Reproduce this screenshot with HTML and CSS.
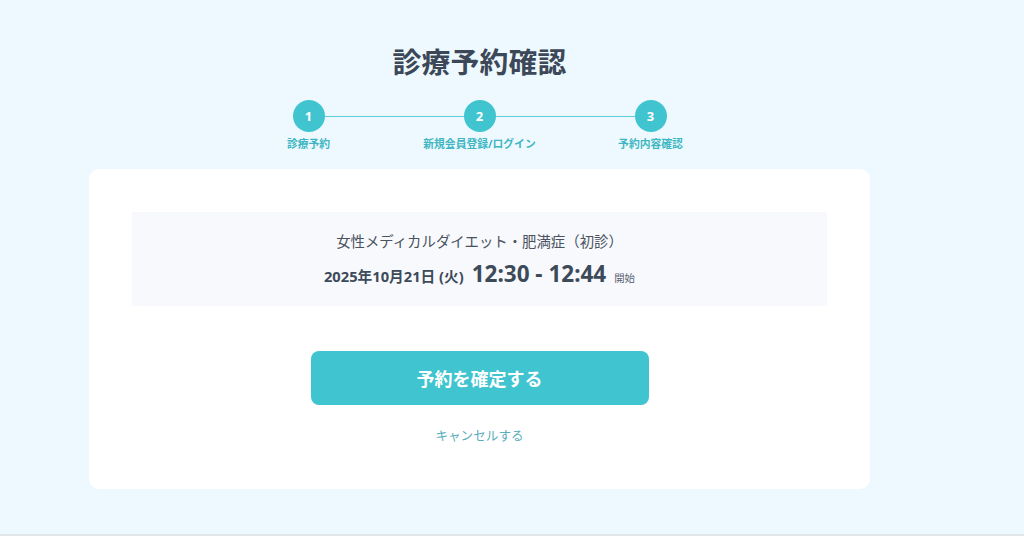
FILE: index.html
```html
<!DOCTYPE html>
<html lang="ja">
<head>
<meta charset="utf-8">
<title>診療予約確認</title>
<link rel="stylesheet" href="styles.css">
</head>
<body>
<div class="page">
  <main class="wrap">
    <h1 class="title">診療予約確認</h1>
    <ol class="steps">
      <li class="step"><span class="dot">1</span><span class="label">診療予約</span></li>
      <li class="step"><span class="dot">2</span><span class="label">新規会員登録/ログイン</span></li>
      <li class="step"><span class="dot">3</span><span class="label">予約内容確認</span></li>
    </ol>
    <section class="card">
      <div class="summary">
        <p class="service">女性メディカルダイエット・肥満症（初診）</p>
        <p class="when"><span class="date">2025年10月21日 (火)</span><span class="time">12:30 - 12:44</span><span class="start">開始</span></p>
      </div>
      <button class="confirm" type="button">予約を確定する</button>
      <a class="cancel" href="#">キャンセルする</a>
    </section>
  </main>
</div>
<footer class="foot"></footer>
</body>
</html>
```
FILE: styles.css
```css
* { box-sizing: border-box; }
html, body { margin: 0; padding: 0; }
body {
  background: #edf9fe;
  font-family: "Noto Sans", "Noto Sans CJK JP", sans-serif;
  color: #3d4756;
}
.page { height: 534px; overflow: hidden; }
.foot { height: 2px; background: #e3e6e8; }
.wrap {
  width: 959px;
  padding-top: 42px;
  display: flex;
  flex-direction: column;
  align-items: center;
}
.title {
  margin: 0;
  font-size: 28.8px;
  line-height: 40px;
  font-weight: 700;
  color: #3c4858;
  letter-spacing: 0.2px;
}
.steps {
  list-style: none;
  margin: 18px 0 0;
  padding: 0;
  display: grid;
  grid-template-columns: repeat(3, 171px);
  position: relative;
}
.steps::before {
  content: "";
  position: absolute;
  top: 16px;
  left: 85.5px;
  right: 85.5px;
  height: 1px;
  background: #5ccfdb;
}
.step {
  display: flex;
  flex-direction: column;
  align-items: center;
  position: relative;
}
.dot {
  width: 32px;
  height: 32px;
  border-radius: 50%;
  background: #40c4cf;
  color: #fff;
  font-weight: 700;
  font-size: 13px;
  display: flex;
  align-items: center;
  justify-content: center;
}
.label {
  margin-top: 5px;
  font-size: 10.8px;
  line-height: 14px;
  font-weight: 700;
  color: #3fb6c2;
  white-space: nowrap;
}
.card {
  margin-top: 18px;
  width: 781px;
  height: 320px;
  background: #fff;
  border-radius: 10px;
  padding: 43px;
  display: flex;
  flex-direction: column;
  align-items: center;
}
.summary {
  width: 100%;
  height: 94px;
  background: #f7f9fc;
  display: flex;
  flex-direction: column;
  align-items: center;
  justify-content: center;
  padding-top: 2px;
}
.service {
  margin: 0;
  font-size: 14.4px;
  line-height: 20px;
  color: #4a5260;
}
.when {
  margin: 7px 0 0;
  display: flex;
  align-items: baseline;
  color: #3d4a5a;
}
.date { font-size: 14.7px; font-weight: 700; }
.time { font-size: 22.5px; font-weight: 700; margin-left: 8px; line-height: 30px; }
.start { font-size: 10.4px; margin-left: 8px; color: #5a6270; }
.confirm {
  margin-top: 45px;
  width: 338px;
  height: 54px;
  border: none;
  border-radius: 8px;
  background: #40c4cf;
  color: #fff;
  font-family: inherit;
  font-size: 18px;
  font-weight: 700;
  cursor: pointer;
}
.cancel {
  margin-top: 21px;
  font-size: 12.6px;
  line-height: 20px;
  color: #58adbb;
  text-decoration: none;
}
```
